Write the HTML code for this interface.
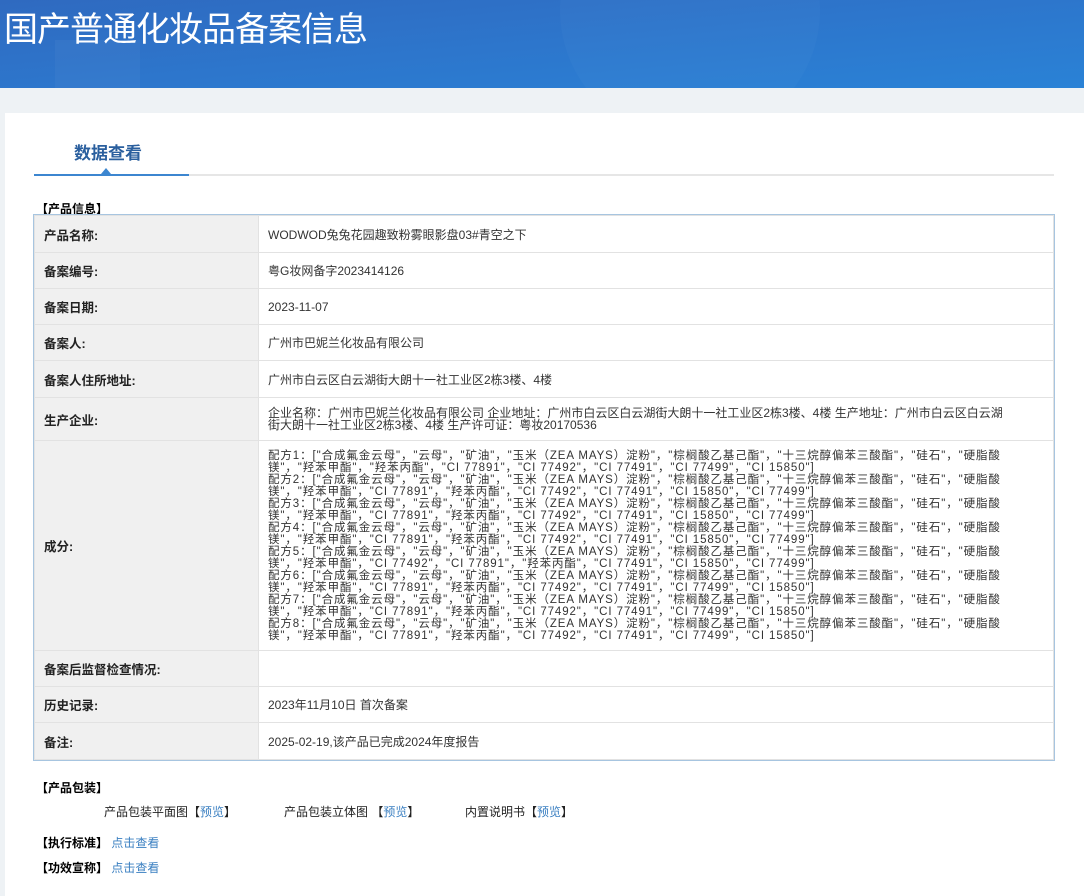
<!DOCTYPE html>
<html><head><meta charset="utf-8">
<style>
*{margin:0;padding:0;box-sizing:border-box}
body{width:1084px;height:896px;overflow:hidden;background:#eef2f5;font-family:"Liberation Sans","Microsoft YaHei","Noto Sans CJK SC",sans-serif;color:#333}
.hdr{height:88px;background:linear-gradient(175deg,#2f6ac0 0%,#2d76cc 50%,#2a82d6 100%);position:relative;overflow:hidden}
.hdr h1{position:absolute;left:4px;top:2px;font-size:34px;font-weight:normal;color:#fff;font-family:"Noto Sans CJK SC",sans-serif;letter-spacing:-1px}
.hdr .c1{position:absolute;left:560px;top:-120px;width:260px;height:260px;border-radius:50%;background:rgba(255,255,255,0.025)}
.hdr .c2{position:absolute;left:55px;top:40px;width:85px;height:60px;background:rgba(255,255,255,0.035)}
.card{position:absolute;left:5px;top:113px;width:1079px;height:783px;background:#fff}
.tab{position:absolute;left:69px;top:26px;font-size:17px;font-weight:bold;color:#2a5f9e;font-family:"Noto Sans CJK SC",sans-serif}
.line{position:absolute;left:29px;top:61px;width:1020px;height:2px;background:#e6e6e6}
.bline{position:absolute;left:29px;top:61px;width:155px;height:2px;background:#3c86d0}
.tri{position:absolute;left:96px;top:55px;width:0;height:0;border-left:5px solid transparent;border-right:5px solid transparent;border-bottom:6px solid #3c86d0}
.sec{position:absolute;font-size:12px;font-weight:bold;color:#000}
table{position:absolute;left:29px;top:102px;width:1020px;border-collapse:collapse;font-size:12px;box-shadow:0 0 0 1px #a7c5e0}
td{border:1px solid #e2e2e2;padding:0 9px;vertical-align:middle}
td.l{width:224px;background:#f0f0f0;font-weight:bold;font-size:12.5px;color:#222}
td.v{color:#333}
.ing{font-size:11.5px;line-height:12px;white-space:nowrap;color:#333;letter-spacing:0.9px}
.pk{position:absolute;font-size:12px;color:#222}
a{color:#3a7fc1;text-decoration:none}
</style></head><body>
<div class="hdr"><div class="c1"></div><div class="c2"></div><h1>国产普通化妆品备案信息</h1></div>
<div class="card">
<div class="tab">数据查看</div>
<div class="line"></div><div class="bline"></div><div class="tri"></div>
<div class="sec" style="left:31px;top:87px">【产品信息】</div>
<table>
<tr style="height:37px"><td class="l">产品名称:</td><td class="v">WODWOD兔兔花园趣致粉雾眼影盘03#青空之下</td></tr>
<tr style="height:36px"><td class="l">备案编号:</td><td class="v">粤G妆网备字2023414126</td></tr>
<tr style="height:36px"><td class="l">备案日期:</td><td class="v">2023-11-07</td></tr>
<tr style="height:36px"><td class="l">备案人:</td><td class="v">广州市巴妮兰化妆品有限公司</td></tr>
<tr style="height:37px"><td class="l">备案人住所地址:</td><td class="v">广州市白云区白云湖街大朗十一社工业区2栋3楼、4楼</td></tr>
<tr style="height:43px"><td class="l">生产企业:</td><td class="v" style="line-height:12px">企业名称：广州市巴妮兰化妆品有限公司 企业地址：广州市白云区白云湖街大朗十一社工业区2栋3楼、4楼 生产地址：广州市白云区白云湖<br>街大朗十一社工业区2栋3楼、4楼 生产许可证：粤妆20170536</td></tr>
<tr style="height:210px"><td class="l">成分:</td><td class="v"><div class="ing">
配方1：["合成氟金云母"，"云母"，"矿油"，"玉米（ZEA MAYS）淀粉"，"棕榈酸乙基己酯"，"十三烷醇偏苯三酸酯"，"硅石"，"硬脂酸<br>镁"，"羟苯甲酯"，"羟苯丙酯"，"CI 77891"，"CI 77492"，"CI 77491"，"CI 77499"，"CI 15850"]<br>
配方2：["合成氟金云母"，"云母"，"矿油"，"玉米（ZEA MAYS）淀粉"，"棕榈酸乙基己酯"，"十三烷醇偏苯三酸酯"，"硅石"，"硬脂酸<br>镁"，"羟苯甲酯"，"CI 77891"，"羟苯丙酯"，"CI 77492"，"CI 77491"，"CI 15850"，"CI 77499"]<br>
配方3：["合成氟金云母"，"云母"，"矿油"，"玉米（ZEA MAYS）淀粉"，"棕榈酸乙基己酯"，"十三烷醇偏苯三酸酯"，"硅石"，"硬脂酸<br>镁"，"羟苯甲酯"，"CI 77891"，"羟苯丙酯"，"CI 77492"，"CI 77491"，"CI 15850"，"CI 77499"]<br>
配方4：["合成氟金云母"，"云母"，"矿油"，"玉米（ZEA MAYS）淀粉"，"棕榈酸乙基己酯"，"十三烷醇偏苯三酸酯"，"硅石"，"硬脂酸<br>镁"，"羟苯甲酯"，"CI 77891"，"羟苯丙酯"，"CI 77492"，"CI 77491"，"CI 15850"，"CI 77499"]<br>
配方5：["合成氟金云母"，"云母"，"矿油"，"玉米（ZEA MAYS）淀粉"，"棕榈酸乙基己酯"，"十三烷醇偏苯三酸酯"，"硅石"，"硬脂酸<br>镁"，"羟苯甲酯"，"CI 77492"，"CI 77891"，"羟苯丙酯"，"CI 77491"，"CI 15850"，"CI 77499"]<br>
配方6：["合成氟金云母"，"云母"，"矿油"，"玉米（ZEA MAYS）淀粉"，"棕榈酸乙基己酯"，"十三烷醇偏苯三酸酯"，"硅石"，"硬脂酸<br>镁"，"羟苯甲酯"，"CI 77891"，"羟苯丙酯"，"CI 77492"，"CI 77491"，"CI 77499"，"CI 15850"]<br>
配方7：["合成氟金云母"，"云母"，"矿油"，"玉米（ZEA MAYS）淀粉"，"棕榈酸乙基己酯"，"十三烷醇偏苯三酸酯"，"硅石"，"硬脂酸<br>镁"，"羟苯甲酯"，"CI 77891"，"羟苯丙酯"，"CI 77492"，"CI 77491"，"CI 77499"，"CI 15850"]<br>
配方8：["合成氟金云母"，"云母"，"矿油"，"玉米（ZEA MAYS）淀粉"，"棕榈酸乙基己酯"，"十三烷醇偏苯三酸酯"，"硅石"，"硬脂酸<br>镁"，"羟苯甲酯"，"CI 77891"，"羟苯丙酯"，"CI 77492"，"CI 77491"，"CI 77499"，"CI 15850"]
</div></td></tr>
<tr style="height:36px"><td class="l">备案后监督检查情况:</td><td class="v"></td></tr>
<tr style="height:36px"><td class="l">历史记录:</td><td class="v">2023年11月10日 首次备案</td></tr>
<tr style="height:37px"><td class="l">备注:</td><td class="v">2025-02-19,该产品已完成2024年度报告</td></tr>
</table>
<div class="sec" style="left:31px;top:666px">【产品包装】</div>
<div class="pk" style="left:99px;top:690px">产品包装平面图【<a>预览</a>】</div>
<div class="pk" style="left:279px;top:690px">产品包装立体图 【<a>预览</a>】</div>
<div class="pk" style="left:460px;top:690px">内置说明书【<a>预览</a>】</div>
<div class="sec" style="left:31px;top:721px">【执行标准】 <a style="font-weight:normal">点击查看</a></div>
<div class="sec" style="left:31px;top:746px">【功效宣称】 <a style="font-weight:normal">点击查看</a></div>
</div>
</body></html>
